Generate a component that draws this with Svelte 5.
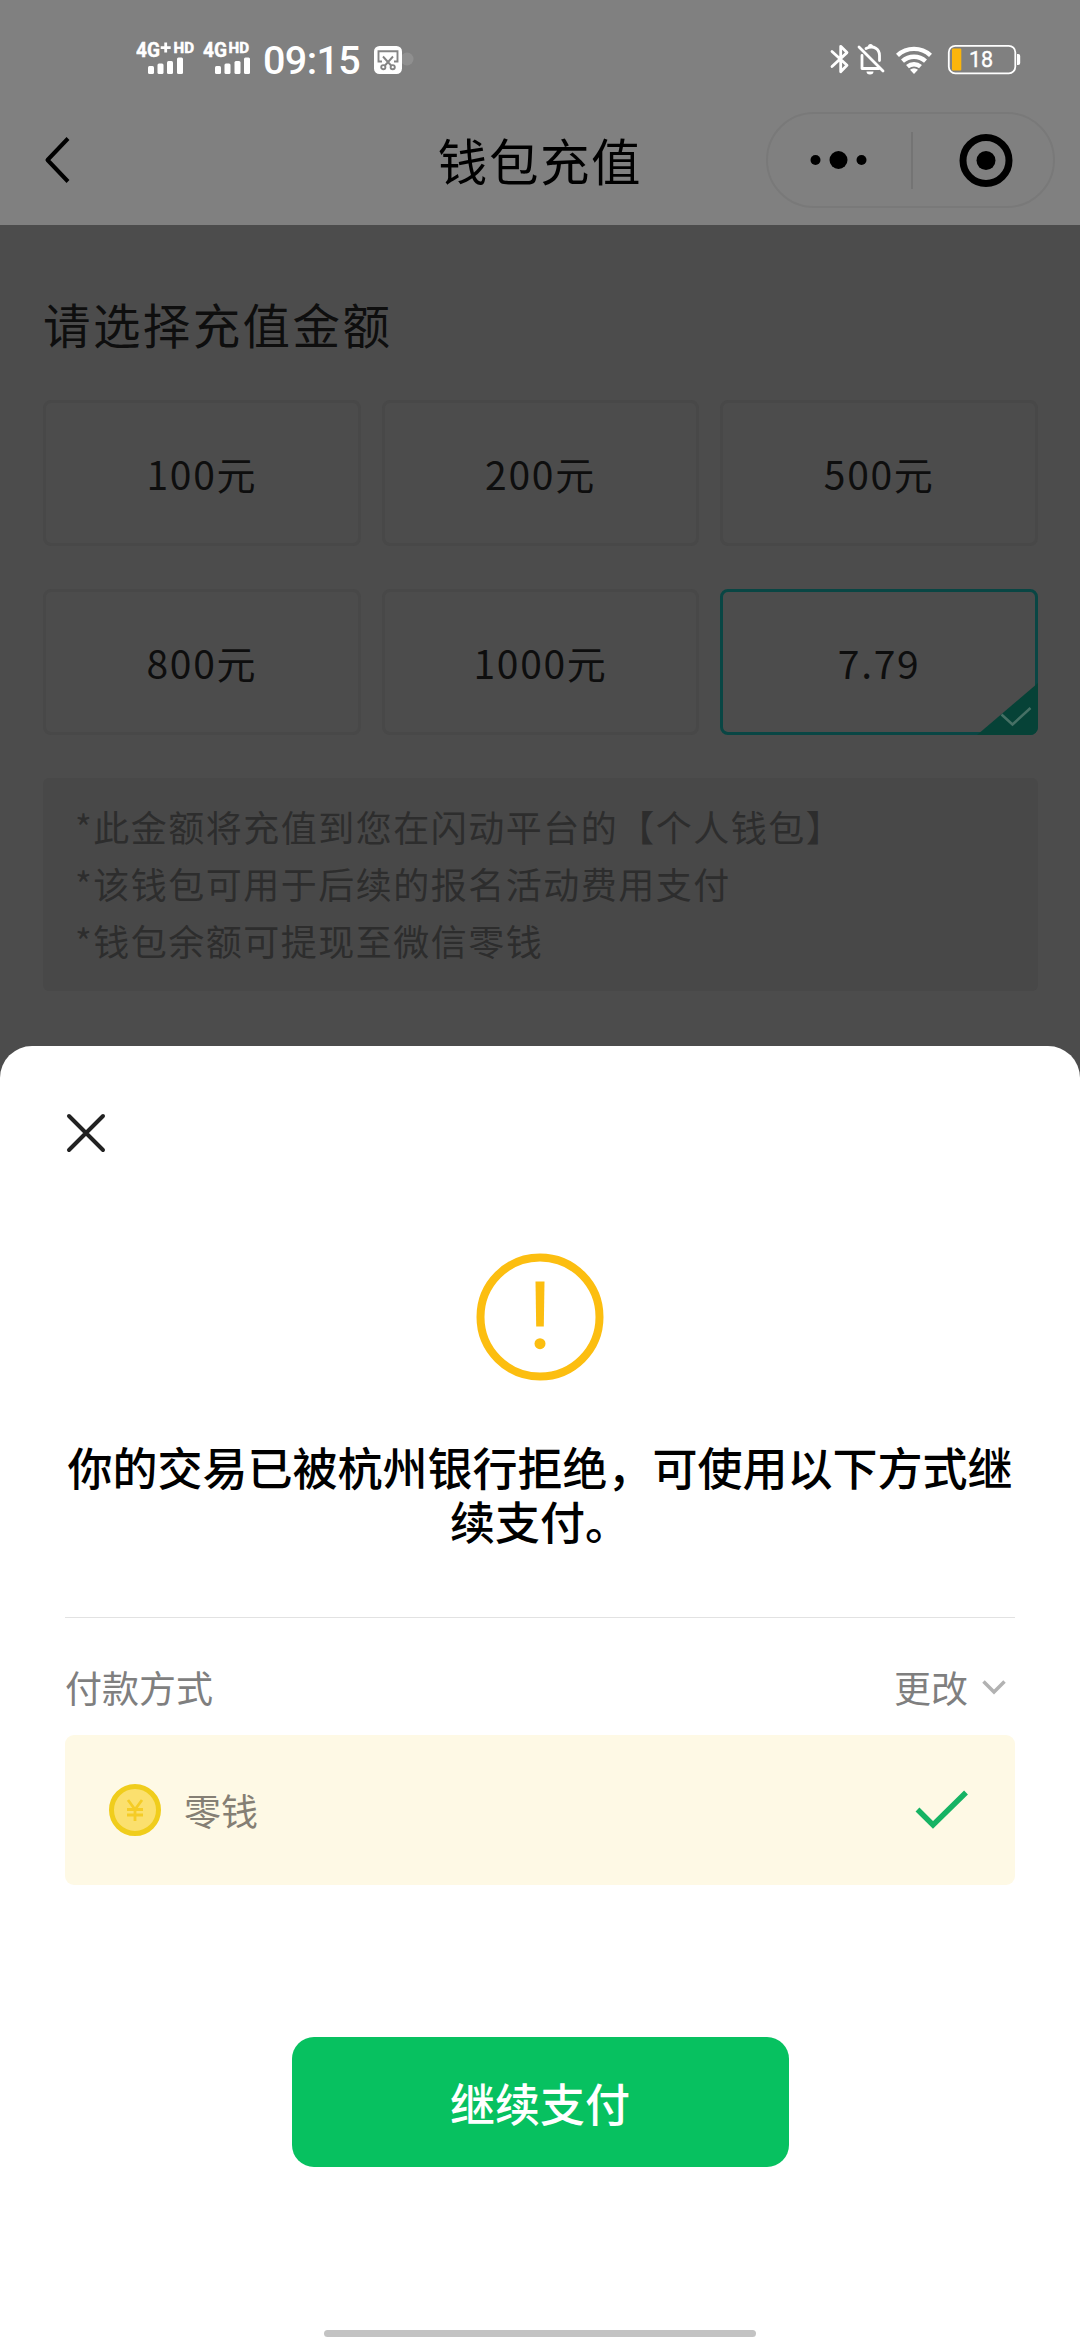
<script>
  const amounts = ['100元', '200元', '500元', '800元', '1000元', '7.79'];
  let selected = $state(5);
  const notes = [
    '*此金额将充值到您在闪动平台的【个人钱包】',
    '*该钱包可用于后续的报名活动费用支付',
    '*钱包余额可提现至微信零钱'
  ];
</script>

<div class="screen">
  <header>
    <div class="status">
      <svg class="signals" width="120" height="52" viewBox="0 -12 120 52">
        <g fill="#fff" font-family="Roboto, sans-serif" font-weight="700">
          <text x="0" y="17" font-size="20" textLength="24" lengthAdjust="spacingAndGlyphs" stroke="#fff" stroke-width="0.400">4G</text>
          <path d="M24.700 7.600h10M29.700 2.600v10" stroke="#fff" stroke-width="2.800" />
          <text x="37.500" y="13" font-size="14" textLength="20.500" lengthAdjust="spacingAndGlyphs" stroke="#fff" stroke-width="0.500">HD</text>
          <text x="67" y="17" font-size="20" textLength="24" lengthAdjust="spacingAndGlyphs" stroke="#fff" stroke-width="0.400">4G</text>
          <text x="92.500" y="13" font-size="14" textLength="20.500" lengthAdjust="spacingAndGlyphs" stroke="#fff" stroke-width="0.500">HD</text>
          <rect x="12" y="26" width="6" height="8" rx="1.500" />
          <rect x="21.500" y="23.500" width="6" height="10.500" rx="1.500" />
          <rect x="31" y="21" width="6" height="13" rx="1.500" />
          <rect x="41" y="17.500" width="6" height="16.500" rx="1.500" />
          <rect x="79" y="26" width="6" height="8" rx="1.500" />
          <rect x="88.500" y="23.500" width="6" height="10.500" rx="1.500" />
          <rect x="98.500" y="21" width="6" height="13" rx="1.500" />
          <rect x="108" y="17.500" width="6" height="16.500" rx="1.500" />
        </g>
      </svg>
      <span class="time">09:15</span>
      <svg class="clip" width="42" height="30" viewBox="0 0 42 30">
        <circle cx="33" cy="14" r="6.500" fill="#8f8f8f" />
        <rect x="0" y="1" width="28" height="28" rx="5.500" fill="#fff" />
        <g fill="none" stroke="#858585" stroke-width="1.900">
          <path d="M8 16.500H4.500V6.200h19v10.300H20" />
          <path d="M9 11.500l8.500 9.500M19 11.500L10.500 21" />
          <circle cx="9.300" cy="22.200" r="2.100" />
          <circle cx="18.700" cy="22.200" r="2.100" />
        </g>
      </svg>
      <svg class="system" width="192" height="34" viewBox="0 0 192 34">
        <g fill="none" stroke="#fff" stroke-width="2.800" stroke-linejoin="round" stroke-linecap="round">
          <path d="M2 9.500l15 13.800-6.300 6.400V4.300l6.300 6.300L2 24.500" />
          <path d="M32 13.500v13h17M36 6.500c8-4 13.500 1 13.500 7v5" />
          <path d="M29 5l24 24" />
        </g>
        <path d="M36.500 29.500h7a3.500 3 0 0 1-7 0zM38 4.500a2.500 2.500 0 0 1 5 0z" fill="#fff" />
        <g fill="none" stroke="#fff" stroke-width="4.400">
          <path d="M67.500 13.300a24.500 24.500 0 0 1 33 0" />
          <path d="M72.500 19.200a17 17 0 0 1 23 0" />
          <path d="M77.500 24.600a10 10 0 0 1 13 0" />
        </g>
        <path d="M84 32l-4-4.300a6 6 0 0 1 8 0z" fill="#fff" />
        <rect x="118.800" y="3.800" width="66.500" height="27.500" rx="6.500" fill="none" stroke="#fff" stroke-width="1.800" />
        <path d="M187 12h1.200a2 2 0 0 1 2 2v7a2 2 0 0 1-2 2H187z" fill="#fff" />
        <rect x="122" y="6.500" width="9.300" height="22" rx="1" fill="#fbb50b" />
        <text x="139" y="25" font-size="21.500" font-family="Roboto, sans-serif" font-weight="400" fill="#fff" stroke="#fff" stroke-width="0.400">18</text>
      </svg>
    </div>
    <div class="nav">
      <svg class="back" width="30" height="50" viewBox="0 0 30 50">
        <path d="M25 3.500L4.500 25 25 46.500" fill="none" stroke="#000" stroke-width="4" stroke-linejoin="round" />
      </svg>
      <h1>钱包充值</h1>
      <div class="capsule">
        <svg width="143" height="60" viewBox="0 0 143 60">
          <circle cx="47.500" cy="30" r="5" /><circle cx="70.500" cy="30" r="9" /><circle cx="93.500" cy="30" r="5" />
        </svg>
        <i></i>
        <svg width="140" height="60" viewBox="0 0 140 60">
          <circle cx="73" cy="30.500" r="23" fill="none" stroke="#000" stroke-width="7" />
          <circle cx="73" cy="30.500" r="9.500" />
        </svg>
      </div>
    </div>
  </header>

  <main>
    <h2>请选择充值金额</h2>
    <div class="grid">
      {#each amounts as amount, i}
        <button class="amount" class:active={i === selected} onclick={() => (selected = i)}>
          {amount}
          {#if i === selected}
            <svg class="corner" width="61" height="52" viewBox="0 0 61 52">
              <path d="M0 52L61 0v44a8 8 0 0 1-8 8z" fill="#064237" />
              <path d="M24.500 31.500L35.500 41.500 53.500 25" fill="none" stroke="#467065" stroke-width="2.500" />
            </svg>
          {/if}
        </button>
      {/each}
    </div>
    <div class="notes">
      {#each notes as note}<p>{note}</p>{/each}
    </div>
  </main>

  <section class="sheet">
    <svg class="close" width="42" height="42" viewBox="0 0 42 42">
      <path d="M4 4l34 34M38 4L4 38" stroke="#222" stroke-width="4" stroke-linecap="round" />
    </svg>
    <svg class="warn" width="128" height="128" viewBox="0 0 128 128">
      <circle cx="64" cy="64" r="59.500" fill="none" stroke="#fcbe10" stroke-width="8" />
      <path d="M59.500 28.500h9l-.7 45h-7.600z" fill="#fcbe10" />
      <circle cx="64" cy="90.700" r="5.500" fill="#fcbe10" />
    </svg>
    <p class="message">你的交易已被杭州银行拒绝，可使用以下方式继续支付。</p>
    <div class="method">
      <span>付款方式</span>
      <span class="change">更改
        <svg width="26" height="18" viewBox="0 0 26 18">
          <path d="M2.500 3.500L13 14 23.500 3.500" fill="none" stroke="#b2b2b2" stroke-width="3.500" />
        </svg>
      </span>
    </div>
    <div class="option">
      <svg width="52" height="52" viewBox="0 0 52 52">
        <circle cx="26" cy="26" r="23.500" fill="#fbe06e" stroke="#f0cd1c" stroke-width="5" />
        <path d="M19 16l7 9.500L33 16M26 25.500V37M18 25.500h16M18 31h16" fill="none" stroke="#f5cc26" stroke-width="2.800" />
      </svg>
      <span>零钱</span>
      <svg class="tick" width="56" height="42" viewBox="0 0 56 42">
        <path d="M3.500 20.500L19 36 52 3.500" fill="none" stroke="#16b364" stroke-width="5.500" />
      </svg>
    </div>
    <button class="pay">继续支付</button>
    <div class="home"></div>
  </section>
</div>

<style>
  :global(body) { margin: 0; background: #4c4c4c; }
  * { box-sizing: border-box; }
  h1, h2, p { margin: 0; font-weight: 400; }
  button { padding: 0; font: inherit; color: inherit; }
  svg { display: block; flex: none; }
  .screen {
    width: 1080px; height: 2340px; overflow: hidden;
    display: flex; flex-direction: column;
    background: #4c4c4c;
    font-family: "Noto Sans CJK SC", sans-serif;
  }
  header { height: 225px; background: #808080; }
  .status { height: 96px; padding: 40px 58px 0 136px; display: flex; align-items: flex-start; }
  .signals { margin: -12px 7px 0 0; }
  .time { width: 100px; padding-top: 1px; font: 500 39.500px/39px Roboto, sans-serif; color: #fff; letter-spacing: -0.600px; }
  .clip { margin: 5px 0 0 11px; }
  .system { margin: 2px 0 0 auto; }
  .nav { height: 128px; display: grid; grid-template-columns: 314px 1fr 314px; align-items: center; padding-right: 25px; padding-left: 25px; }
  .back { margin-left: 18px; }
  h1 { text-align: center; font-size: 49.500px; line-height: 60px; letter-spacing: 1.600px; color: #000; white-space: nowrap; }
  .capsule { height: 96px; width: 289px; margin-left: auto; border: 2px solid #797979; border-radius: 48px; display: flex; align-items: center; }
  .capsule i { width: 2px; height: 57px; background: #747474; }
  main { height: 821px; padding: 69px 42px 0 43px; color: #0e0e0e; }
  h2 { font-size: 47.500px; line-height: 60px; letter-spacing: 2.400px; }
  .grid { margin-top: 46px; display: grid; grid-template-columns: repeat(3, 1fr); gap: 43px 21px; }
  .amount {
    position: relative; height: 146px; border: 3px solid #484848; border-radius: 8px; background: none;
    font-size: 39px; letter-spacing: 1.700px;
  }
  .amount.active { border-color: #094644; }
  .corner { position: absolute; right: -3px; bottom: -3px; }
  .notes { margin-top: 43px; height: 213px; padding: 20px 32px; background: #484848; border-radius: 6px; color: #2d2d2d; }
  .notes p { font-size: 36px; line-height: 57.200px; letter-spacing: 1.500px; white-space: nowrap; }
  .sheet {
    flex: 1; padding: 66px 65px 0; background: #fff; border-radius: 32px 32px 0 0;
    display: flex; flex-direction: column; align-items: center;
  }
  .close { align-self: flex-start; }
  .warn { margin-top: 99px; }
  .message { margin-top: 59px; height: 177px; width: 950px; text-align: center; font-size: 45px; line-height: 54px; font-weight: 500; color: #000; }
  .method { width: 950px; height: 118px; border-top: 1px solid #e2e2e2; display: flex; align-items: flex-start; justify-content: space-between; padding: 44px 8px 0 0; font-size: 37px; line-height: 50px; color: #7f7f7f; }
  .change { display: flex; align-items: center; gap: 13px; }
  .option { width: 950px; height: 150px; background: #fef9e5; border-radius: 9px; display: flex; align-items: center; padding: 0 45px 0 44px; font-size: 37px; line-height: 50px; color: #857f74; }
  .option span { margin-left: 23px; }
  .tick { margin-left: auto; }
  .pay { margin-top: 152px; width: 497px; height: 130px; border: 0; border-radius: 22px; background: #07c160; color: #fff; font-size: 45px; font-weight: 500; flex: none; }
  .home { margin-top: 163px; width: 432px; height: 7px; border-radius: 4px; background: #c3c3c3; flex: none; }
</style>
